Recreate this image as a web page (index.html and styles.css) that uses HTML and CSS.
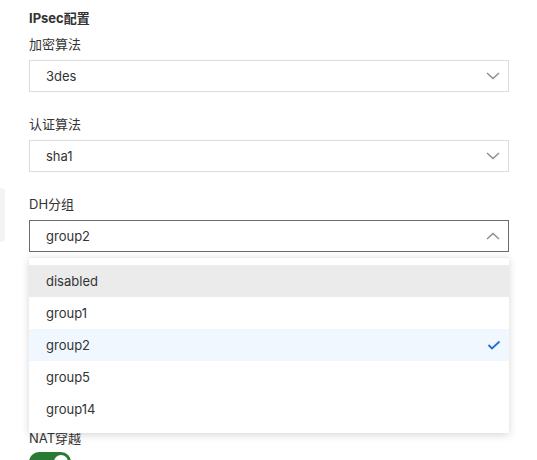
FILE: index.html
```html
<!DOCTYPE html>
<html lang="zh">
<head>
<meta charset="utf-8">
<link rel="stylesheet" href="styles.css">
</head>
<body>
<div class="side-tab"></div>
<div class="form">
  <div class="title">IPsec配置</div>

  <div class="field">
    <div class="label">加密算法</div>
    <div class="select">
      <span class="value">3des</span>
      <svg class="chev" width="14" height="8" viewBox="0 0 14 8"><path d="M1 1 L7 6.5 L13 1" fill="none" stroke="#8a8a8a" stroke-width="1.3"/></svg>
    </div>
  </div>

  <div class="field">
    <div class="label">认证算法</div>
    <div class="select">
      <span class="value">sha1</span>
      <svg class="chev" width="14" height="8" viewBox="0 0 14 8"><path d="M1 1 L7 6.5 L13 1" fill="none" stroke="#8a8a8a" stroke-width="1.3"/></svg>
    </div>
  </div>

  <div class="field dh">
    <div class="label">DH分组</div>
    <div class="select open">
      <span class="value">group2</span>
      <svg class="chev" width="14" height="8" viewBox="0 0 14 8"><path d="M1 7 L7 1.5 L13 7" fill="none" stroke="#8a8a8a" stroke-width="1.3"/></svg>
    </div>
    <ul class="menu">
      <li class="item hover">disabled</li>
      <li class="item">group1</li>
      <li class="item selected">group2
        <svg class="check" width="14" height="10" viewBox="0 0 14 10"><path d="M1.5 5 L5 8.5 L12.5 1.5" fill="none" stroke="#1f6fd1" stroke-width="1.8"/></svg>
      </li>
      <li class="item">group5</li>
      <li class="item">group14</li>
    </ul>
  </div>

  <div class="field nat">
    <div class="label">NAT穿越</div>
    <div class="toggle"><span class="knob"></span></div>
  </div>
</div>
</body>
</html>
```
FILE: styles.css
```css
html, body {
  margin: 0;
  padding: 0;
  background: #ffffff;
  overflow: hidden;
}
body {
  font-family: Inter, "Noto Sans CJK SC", sans-serif;
  color: #333333;
  font-size: 13px;
  width: 537px;
  height: 460px;
  position: relative;
}
.side-tab {
  position: absolute;
  left: 0;
  top: 188px;
  width: 5px;
  height: 54px;
  background: #f3f3f3;
  border-radius: 0 4px 4px 0;
}
.form {
  padding: 8px 0 0 29px;
  width: 480px;
}
.title {
  font-weight: 700;
  font-size: 13px;
  line-height: 20px;
  color: #333;
  margin-bottom: 6px;
}
.field {
  margin-bottom: 22px;
  position: relative;
}
.field.dh {
  margin-bottom: 176px;
}
.label {
  font-size: 13px;
  line-height: 20px;
  color: #333;
  margin-bottom: 6px;
}
.select {
  height: 32px;
  box-sizing: border-box;
  border: 1px solid #dcdcdc;
  display: flex;
  align-items: center;
  justify-content: space-between;
  padding: 0 8px 0 16px;
  background: #fff;
}
.select.open {
  border-color: #6b6b6b;
}
.value {
  font-size: 13px;
  color: #333;
}
.chev {
  display: block;
}
.menu {
  position: absolute;
  left: 0;
  right: 0;
  top: 63px;
  margin: 0;
  padding: 7px 0 8px;
  list-style: none;
  background: #fff;
  border-top: 1px solid #eeeeee;
  box-shadow: 0 2px 8px rgba(0, 0, 0, 0.16);
  z-index: 5;
}
.item {
  height: 32px;
  display: flex;
  align-items: center;
  justify-content: space-between;
  padding: 0 8px 0 17px;
  font-size: 13px;
  color: #333;
}
.item.hover {
  background: #ebebeb;
}
.item.selected {
  background: #f0f7ff;
}
.check {
  display: block;
}
.nat .label {
  margin-bottom: 4px;
}
.toggle {
  width: 42px;
  height: 20px;
  border-radius: 10px;
  background: #2b7a34;
  position: relative;
}
.knob {
  position: absolute;
  right: 3px;
  top: 3px;
  width: 14px;
  height: 14px;
  border-radius: 50%;
  background: #fff;
}
```
